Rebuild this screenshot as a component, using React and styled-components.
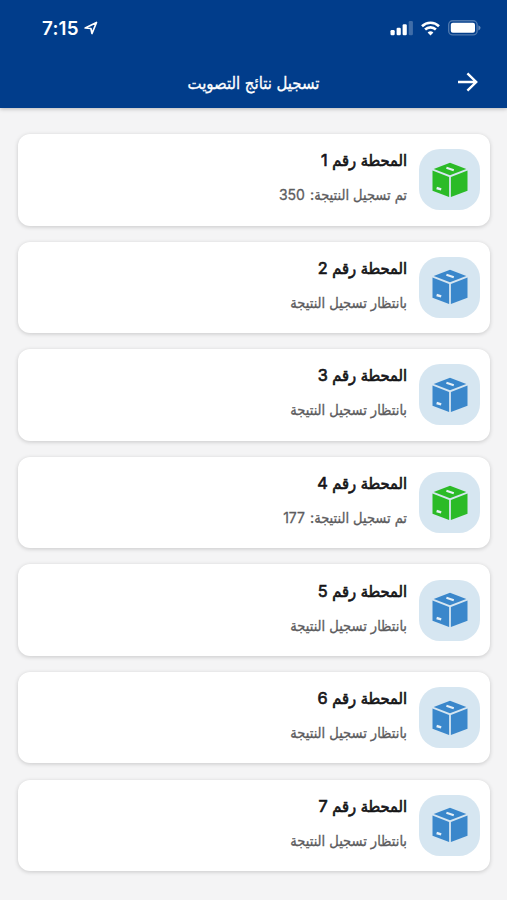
import React from "react";
import styled, { createGlobalStyle } from "styled-components";

const GlobalStyle = createGlobalStyle`
  * {
    box-sizing: border-box;
  }
  body {
    margin: 0;
    background: #f4f4f5;
    font-family: Inter, "DejaVu Sans Condensed", "DejaVu Sans", sans-serif;
  }
`;

const Screen = styled.div`
  height: 900px;
  overflow: hidden;
  background: #f4f4f5;
`;

const Header = styled.header`
  height: 108px;
  background: #013d8b;
  color: #fff;
  box-shadow: 0 1px 4px rgba(0, 0, 0, 0.25);
`;

const StatusBar = styled.div`
  display: flex;
  justify-content: space-between;
  align-items: center;
  height: 56px;
  padding: 0 26px 0 42px;
`;

const Clock = styled.div`
  display: flex;
  align-items: center;
  gap: 5px;
  font-size: 18.8px;
  font-weight: 600;
  letter-spacing: 0.2px;
`;

const Indicators = styled.div`
  display: flex;
  align-items: center;
  gap: 8px;
`;

const TitleBar = styled.div`
  display: grid;
  grid-template-columns: 50px 1fr 50px;
  align-items: center;
  height: 52px;
`;

const PageTitle = styled.h1`
  margin: 0;
  padding-top: 2px;
  font-size: 16.6px;
  font-weight: 400;
  line-height: 24px;
  text-align: center;
  white-space: nowrap;
  -webkit-text-stroke: 0.3px;
`;

const BackButton = styled.button`
  display: flex;
  padding: 0;
  border: none;
  background: none;
  color: #fff;
  cursor: pointer;
`;

const List = styled.main`
  display: flex;
  flex-direction: column;
  gap: 16.1px;
  padding: 26px 17px 0 17.5px;
`;

const Card = styled.article`
  display: flex;
  gap: 12px;
  height: 91.5px;
  padding: 15.3px 10px 0;
  border-radius: 12px;
  background: #fff;
  box-shadow: 0 1px 4px rgba(0, 0, 0, 0.18);
`;

const Tile = styled.div`
  display: flex;
  align-items: center;
  justify-content: center;
  width: 61px;
  height: 61px;
  border-radius: 21px;
  background: #d6e6f1;
  color: ${props => (props.$done ? "#2bbb27" : "#3a87cb")};
`;

const Info = styled.div`
  display: flex;
  flex-direction: column;
  align-items: flex-start;
  gap: 11px;
  white-space: nowrap;
`;

const Name = styled.h2`
  margin: 0;
  color: #151517;
  font-size: 16.3px;
  font-weight: 400;
  line-height: 23px;
  -webkit-text-stroke: 0.65px;
`;

const Status = styled.p`
  margin: 0;
  color: #5c5c5e;
  font-size: 14.5px;
  line-height: 24px;
  -webkit-text-stroke: 0.3px;
`;

const Votes = styled.span`
  margin-right: 1px;
  font-size: 14px;
`;

const LocationIcon = () => (
  <svg width="14" height="14" viewBox="0 0 14 14" fill="none">
    <path
      d="M1.2 7 12.5 1.5 8 12.5 6.9 7.5Z"
      stroke="#fff"
      strokeWidth="1.7"
      strokeLinejoin="round"
    />
  </svg>
);

const SignalIcon = () => (
  <svg width="23" height="16" viewBox="0 0 23 16" fill="#fff">
    <rect x="0.5" y="10" width="4.2" height="5.2" rx="1.2" />
    <rect x="6.6" y="7.8" width="4.2" height="7.4" rx="1.2" />
    <rect x="12.6" y="4.2" width="4.2" height="11" rx="1.2" />
    <rect x="18.7" y="1" width="4.2" height="14.2" rx="1.2" opacity="0.25" />
  </svg>
);

const WifiIcon = () => (
  <svg width="19" height="15" viewBox="0 0 19 15" fill="none">
    <g stroke="#fff" strokeWidth="2.6">
      <path d="M1 5.2a12.2 12.2 0 0 1 17 0" />
      <path d="M4.1 8.5a7.8 7.8 0 0 1 10.8 0" />
    </g>
    <path d="M9.5 14.6 6.6 11.6a4.2 4.2 0 0 1 5.8 0Z" fill="#fff" />
  </svg>
);

const BatteryIcon = () => (
  <svg width="33" height="16" viewBox="0 0 33 16">
    <rect
      x="0.7"
      y="0.7"
      width="28.4"
      height="14.2"
      rx="4"
      fill="none"
      stroke="#fff"
      strokeOpacity="0.3"
      strokeWidth="1.4"
    />
    <rect x="2.8" y="2.8" width="24.2" height="10" rx="2" fill="#fff" />
    <path d="M30.4 5.2q2.2 1 2.2 2.6t-2.2 2.6Z" fill="#fff" opacity="0.4" />
  </svg>
);

const ArrowIcon = () => (
  <svg width="21" height="20" viewBox="0 0 21 20" fill="none">
    <path
      d="M1 10H19M10.4 1.4 19.2 10 10.4 18.6"
      stroke="#fff"
      strokeWidth="2.4"
    />
  </svg>
);

const BoxIcon = () => (
  <svg width="36" height="36" viewBox="0 0 36 36" fill="currentColor">
    <path d="M18 .8 34.3 7 18 13.2 1.7 7Z" />
    <path d="M.5 8.6 17.1 14.9V35L.5 28.8Z" />
    <path d="M18.9 14.9 35.5 8.6V28.8L18.9 35Z" />
    <path d="M14.4 5.7 21.8 8.3" stroke="#e6f0f7" strokeWidth="2.1" />
    <path d="M4.6 26 9.2 27.3" stroke="#e6f0f7" strokeWidth="2.4" />
  </svg>
);

const stations = [
  { id: 1, votes: 350 },
  { id: 2 },
  { id: 3 },
  { id: 4, votes: 177 },
  { id: 5 },
  { id: 6 },
  { id: 7 }
];

const Station = ({ id, votes }) => (
  <Card>
    <Tile $done={votes !== undefined}>
      <BoxIcon />
    </Tile>
    <Info>
      <Name>المحطة رقم {id}</Name>
      {votes !== undefined ? (
        <Status>
          تم تسجيل النتيجة: <Votes>{votes}</Votes>
        </Status>
      ) : (
        <Status>بانتظار تسجيل النتيجة</Status>
      )}
    </Info>
  </Card>
);

const App = () => (
  <Screen>
    <GlobalStyle />
    <Header>
      <StatusBar>
        <Clock>
          7:15
          <LocationIcon />
        </Clock>
        <Indicators>
          <SignalIcon />
          <WifiIcon />
          <BatteryIcon />
        </Indicators>
      </StatusBar>
      <TitleBar>
        <span />
        <PageTitle dir="rtl">تسجيل نتائج التصويت</PageTitle>
        <BackButton aria-label="رجوع">
          <ArrowIcon />
        </BackButton>
      </TitleBar>
    </Header>
    <List dir="rtl">
      {stations.map(station => (
        <Station key={station.id} {...station} />
      ))}
    </List>
  </Screen>
);

export default App;
